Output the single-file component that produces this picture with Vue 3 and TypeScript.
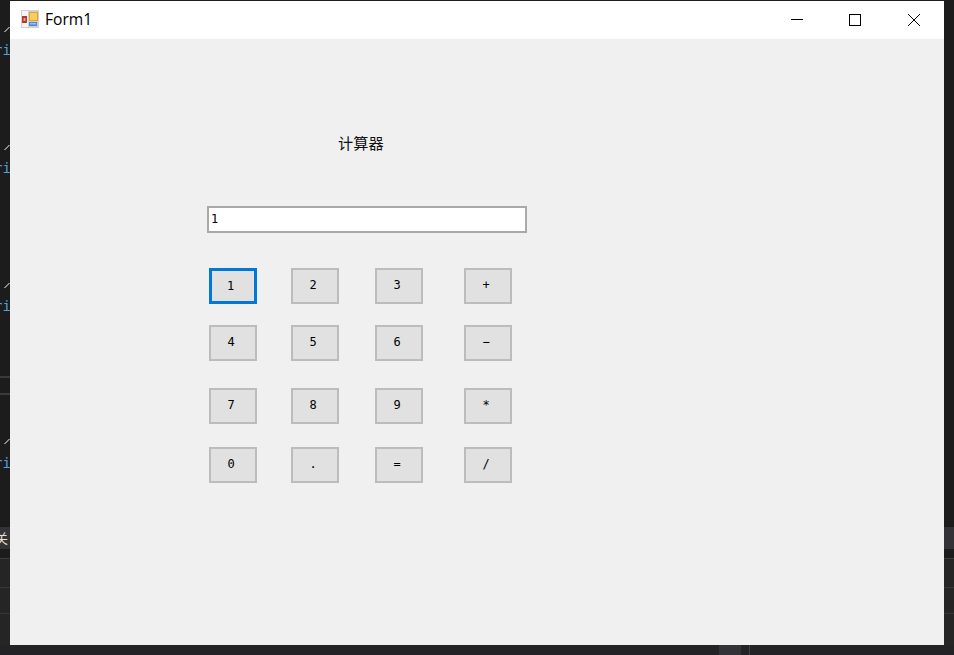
<script setup lang="ts">
import { ref } from "vue";

const display = ref("1");

// keypad, row by row
const keys = ["1", "2", "3", "+", "4", "5", "6", "−", "7", "8", "9", "*", "0", ".", "=", "/"];

// code fragments of the editor that peek out left of the form
const slashes = [27, 145, 283, 439];
const snippets = [42, 160, 298, 455];

function press(key: string) {
  display.value = key;
}
</script>

<template>
  <div class="desktop">
    <div class="editor">
      <span v-for="y in slashes" :key="y" class="slash" :style="{ top: y + 'px' }"></span>
      <span v-for="y in snippets" :key="y" class="snippet" :style="{ top: y + 'px' }">ri</span>
      <span class="rule rule-a"></span>
      <span class="rule rule-b"></span>
      <span class="band"></span>
      <span class="kanji">关</span>
      <span class="lower"></span>
    </div>
    <div class="side-right">
      <span class="band"></span>
      <span class="lower"></span>
    </div>
    <div class="status">
      <span class="status-tab"></span>
      <span class="status-sep"></span>
    </div>

    <div class="window">
      <header class="titlebar">
        <svg class="app-icon" width="18" height="18" viewBox="0 0 18 18">
          <rect x="0" y="0" width="18" height="18" fill="#d0d0d0" />
          <rect x="1" y="1" width="6" height="16" fill="#f4f4f4" />
          <rect x="1" y="6" width="5" height="7" fill="#b5352f" />
          <rect x="2.5" y="8" width="2" height="3" fill="#e39a90" />
          <rect x="8" y="2" width="9" height="9" fill="#d9a52c" />
          <rect x="9" y="3" width="7" height="7" fill="#f4cf5e" />
          <rect x="8" y="12" width="8" height="4" fill="#4f86d6" />
          <rect x="9" y="13" width="6" height="1.5" fill="#9cc0ee" />
        </svg>
        <span class="title">Form1</span>
        <div class="caption">
          <button class="cap" aria-label="Minimize">
            <svg width="12" height="12" viewBox="0 0 12 12"><path d="M0 5.5H12" stroke="#000" fill="none" /></svg>
          </button>
          <button class="cap" aria-label="Maximize">
            <svg width="12" height="12" viewBox="0 0 12 12"><rect x="0.5" y="0.5" width="11" height="11" stroke="#000" fill="none" /></svg>
          </button>
          <button class="cap" aria-label="Close">
            <svg width="12" height="12" viewBox="0 0 12 12"><path d="M0 0L12 12M12 0L0 12" stroke="#000" fill="none" /></svg>
          </button>
        </div>
      </header>

      <main class="client">
        <div class="label">计算器</div>
        <input v-model="display" class="display" type="text" />
        <div class="keypad">
          <button
            v-for="(key, i) in keys"
            :key="key"
            class="key"
            :class="{ focused: i === 0 }"
            @click="press(key)"
          >{{ key }}</button>
        </div>
      </main>
    </div>
  </div>
</template>

<style>
html,
body {
  margin: 0;
  background: #1c1c1c;
  overflow: hidden;
}
</style>

<style scoped>
.desktop {
  position: relative;
  width: 954px;
  height: 655px;
  background: #1c1c1c;
  overflow: hidden;
}

.editor {
  position: absolute;
  left: 0;
  top: 0;
  width: 10px;
  height: 645px;
  overflow: hidden;
}

.slash {
  position: absolute;
  left: 4px;
  width: 6px;
  height: 5px;
  background: linear-gradient(to top left, transparent 42%, #8a8a8a 42%, #8a8a8a 58%, transparent 58%);
}

.snippet {
  position: absolute;
  left: -6px;
  font: 14px/16px "DejaVu Sans Mono", monospace;
  color: #569cd6;
}

.rule {
  position: absolute;
  left: 0;
  width: 10px;
  height: 2px;
  background: #3a3a3a;
}

.rule-a {
  top: 376px;
}

.rule-b {
  top: 393px;
}

.band {
  position: absolute;
  left: 0;
  top: 527px;
  width: 10px;
  height: 22px;
  background: #333337;
}

.kanji {
  position: absolute;
  left: -5px;
  top: 530px;
  font: 13px/16px "Noto Sans CJK SC", sans-serif;
  color: #e8e0d0;
}

.lower {
  position: absolute;
  left: 0;
  top: 558px;
  width: 10px;
  height: 87px;
  box-sizing: border-box;
  border-top: 1px solid #3a3a3a;
  background:
    linear-gradient(#37373a, #37373a) 0 28px / 100% 1px no-repeat,
    linear-gradient(#37373a, #37373a) 0 54px / 100% 1px no-repeat,
    #252526;
}

.side-right {
  position: absolute;
  left: 944px;
  top: 0;
  width: 10px;
  height: 645px;
}

.status {
  position: absolute;
  left: 0;
  top: 645px;
  width: 954px;
  height: 10px;
  background: #232325;
}

.status-tab {
  position: absolute;
  left: 719px;
  top: 0;
  width: 22px;
  height: 10px;
  background: #333337;
}

.status-sep {
  position: absolute;
  left: 749px;
  top: 0;
  width: 1px;
  height: 10px;
  background: #3f3f46;
}

.window {
  position: absolute;
  left: 10px;
  top: 1px;
  width: 934px;
  height: 644px;
  display: flex;
  flex-direction: column;
  background: #f0f0f0;
}

.titlebar {
  box-sizing: border-box;
  height: 38px;
  flex: none;
  display: flex;
  align-items: center;
  padding: 0 1px 2px 11px;
  background: #fff;
}

.app-icon {
  flex: none;
}

.title {
  margin-left: 6px;
  font: 15.6px/20px "Open Sans", "Noto Sans", sans-serif;
  color: #000;
}

.caption {
  margin: 0 0 -2px auto;
  display: flex;
}

.cap {
  width: 58.5px;
  height: 38px;
  padding: 0;
  border: 0;
  background: transparent;
  display: flex;
  align-items: center;
  justify-content: center;
}

.client {
  flex: 1;
  display: flex;
  flex-direction: column;
  align-items: flex-start;
  padding: 93px 0 0 197px;
}

.label {
  margin-left: 131px;
  font: 15.2px/20px "Noto Sans CJK SC", sans-serif;
  color: #111;
}

.display {
  box-sizing: border-box;
  width: 320px;
  height: 27px;
  margin-top: 54px;
  padding: 0 2px 2px;
  border: 2px solid #a9a9a9;
  border-radius: 0;
  outline: 0;
  background: #fff;
  font: 12px "DejaVu Sans Mono", monospace;
  color: #000;
}

.keypad {
  display: grid;
  grid-template-columns: 82px 84px 89px 48px;
  grid-template-rows: 57px 63px 59px 36px;
  margin: 35px 0 0 2px;
}

.key {
  box-sizing: border-box;
  width: 48px;
  height: 36px;
  padding: 0 4px 2px 0;
  border: 2px solid #bcbcbc;
  border-radius: 0;
  background: #e1e1e1;
  font: 12px "DejaVu Sans Mono", monospace;
  color: #000;
}

.key.focused {
  border: 3px solid #0078d7;
  padding: 0 5px 1px 0;
}
</style>
